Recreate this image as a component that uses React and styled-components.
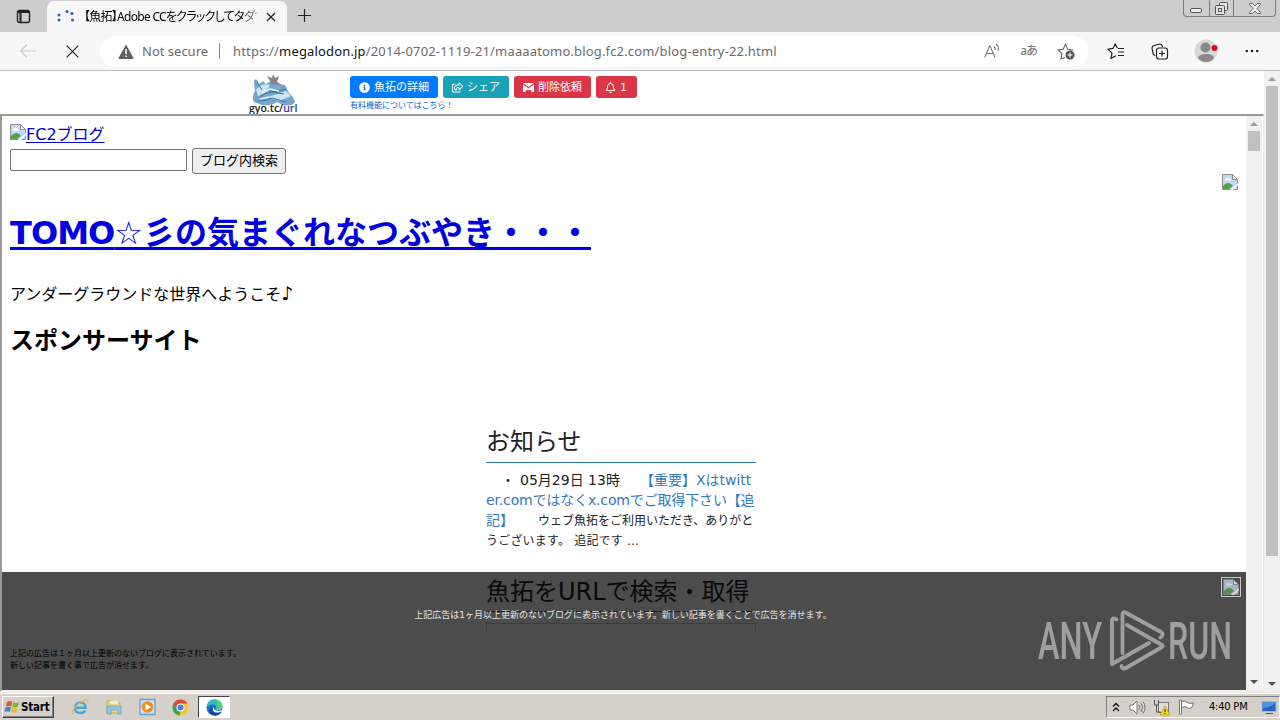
import React from 'react';
import styled, { createGlobalStyle, css } from 'styled-components';
import { FaInfoCircle, FaRegBell, FaRegShareSquare } from 'react-icons/fa';

const GlobalStyle = createGlobalStyle`
  * {
    box-sizing: border-box;
  }
  body {
    margin: 0;
    overflow: hidden;
    font-family: 'DejaVu Sans', 'Noto Sans CJK JP', sans-serif;
  }
  svg {
    display: block;
    flex: none;
  }
`;

const Desktop = styled.div`
  position: relative;
  display: flex;
  flex-direction: column;
  width: 1280px;
  height: 720px;
  overflow: hidden;
  background: #fff;
`;

// Tab strip
const TabStrip = styled.div`
  display: flex;
  align-items: flex-end;
  height: 32px;
  padding-left: 16px;
  background: #cdcdcd;
`;

const TabActions = styled.div`
  width: 31px;
  padding-bottom: 8px;
`;

const Tab = styled.div`
  display: flex;
  align-items: center;
  width: 240px;
  height: 31px;
  padding: 0 11px 0 10px;
  border-radius: 7px 7px 0 0;
  background: #f7f7f7;
`;

const TabTitle = styled.div`
  width: 174px;
  margin: 0 8px 0 9px;
  white-space: nowrap;
  font: 12px/20px 'Noto Sans', 'Noto Sans CJK JP', sans-serif;
  font-feature-settings: 'palt';
  letter-spacing: -0.72px;
  mask-image: linear-gradient(to right, #000 90%, rgba(0, 0, 0, 0.25) 100%);
`;

const NewTab = styled.div`
  flex: 1;
  padding: 0 0 9px 10px;
`;

const WindowButtons = styled.div`
  display: flex;
  align-self: flex-start;
  width: 93px;
  height: 17px;
  margin-right: 4px;
  border: 1px solid #7c7c7c;
  border-top: 0;
  border-radius: 0 0 4px 4px;
`;

const WindowButton = styled.div`
  display: flex;
  align-items: center;
  justify-content: center;
  width: ${(p) => p.$width}px;
  & + & {
    border-left: 1px solid #7c7c7c;
  }
`;

// Toolbar
const Toolbar = styled.div`
  display: flex;
  align-items: center;
  height: 39px;
  padding-left: 19px;
  border-bottom: 1px solid #b9b9b9;
  background: #f7f7f7;
`;

const AddressBar = styled.div`
  display: flex;
  align-items: center;
  width: 988px;
  height: 31px;
  margin: 0 19px 0 20px;
  padding: 0 13px 0 18px;
  border-radius: 16px;
  background: #fff;
  color: #6b6b6b;
  font: 13px/20px 'Noto Sans', sans-serif;
  white-space: nowrap;
`;

const NotSecure = styled.div`
  width: 78px;
  margin-left: 8px;
  border-right: 1px solid #8a8a8a;
  line-height: 16px;
`;

const Url = styled.div`
  flex: 1;
  padding-left: 13px;
  letter-spacing: 0.16px;
  b {
    color: #111;
    font-weight: 400;
  }
`;

const AddressIcons = styled.div`
  display: flex;
  align-items: center;
  gap: 20px;
`;

const Translate = styled.span`
  font: 12px/16px 'Noto Sans', 'Noto Sans CJK JP', sans-serif;
  letter-spacing: -1px;
`;

const BrowserIcons = styled.div`
  display: flex;
  align-items: center;
`;

const Spacer = styled.div`
  width: ${(p) => p.$width}px;
`;

// Page
const PageArea = styled.div`
  display: flex;
  height: 621px;
`;

const Page = styled.div`
  display: flex;
  flex-direction: column;
  width: 1264px;
`;

const ArchiveHeader = styled.div`
  display: flex;
  height: 43px;
  padding-left: 248px;
`;

const Logo = styled.div`
  width: 102px;
  padding-top: 2px;
`;

const Actions = styled.div`
  padding-top: 5px;
`;

const ButtonRow = styled.div`
  display: flex;
  gap: 5px;
`;

const ActionButton = styled.div`
  display: flex;
  align-items: center;
  gap: 4px;
  width: ${(p) => p.$width}px;
  height: 22px;
  padding-left: 9px;
  border-radius: 3px;
  background: ${(p) => p.$color};
  color: #fff;
  font-size: 11px;
  line-height: 22px;
  white-space: nowrap;
  span {
    padding-top: 2px;
  }
`;

const PaidLink = styled.div`
  height: 14px;
  padding-top: 1px;
  color: #0068d6;
  font-size: 8px;
  line-height: 13px;
`;

const Frame = styled.div`
  position: relative;
  display: flex;
  height: 578px;
  width: 1264px;
  border: 2px solid #9a9a9a;
  border-right: 1px solid #eee;
  border-bottom-color: #f0f0f0;
`;

const FrameBody = styled.div`
  display: flex;
  flex-direction: column;
  width: 1244px;
  height: 574px;
  padding: 7px 8px 0;
  overflow: hidden;
  color: #000;
  white-space: nowrap;
`;

const Fc2Link = styled.div`
  display: flex;
  align-items: flex-start;
  height: 25px;
  padding-top: 1px;
  color: #0000c8;
  font-size: 16px;
  line-height: 24px;
  span {
    text-decoration: underline;
    text-underline-offset: 2px;
    line-height: 22px;
  }
`;

const SearchRow = styled.div`
  display: flex;
  align-items: center;
  gap: 5px;
  height: 26px;
`;

const SearchInput = styled.input`
  width: 177px;
  height: 22px;
  margin-bottom: 2px;
  border: 1px solid #767676;
  border-radius: 2px;
`;

const SearchButton = styled.div`
  width: 94px;
  height: 26px;
  border: 1px solid #767676;
  border-radius: 3px;
  background: #efefef;
  font-size: 13px;
  line-height: 23px;
  text-align: center;
`;

const RightImage = styled.div`
  display: flex;
  justify-content: flex-end;
  height: 18px;
`;

const BlogTitle = styled.h1`
  margin: 17px 0 0;
  height: 48px;
  color: #0000e0;
  font-size: 32px;
  line-height: 49px;
  text-decoration: underline;
  text-decoration-thickness: 3px;
  text-underline-offset: 3px;
  text-decoration-skip-ink: none;
  span {
    letter-spacing: -0.95px;
  }
`;

const BlogIntro = styled.p`
  margin: 23px 0 0;
  height: 24px;
  font-size: 16px;
  line-height: 26px;
  span {
    font-size: 19px;
  }
`;

const SponsorTitle = styled.h2`
  margin: 18px 0 0;
  height: 36px;
  font-size: 24px;
  line-height: 39px;
`;

const Notice = styled.section`
  width: 270px;
  margin: 65px 0 0 476px;
  color: #222;
`;

const NoticeTitle = styled.h3`
  margin: 0;
  height: 40px;
  border-bottom: 1px solid #2a78b8;
  font-size: 24px;
  line-height: 39px;
  font-weight: 400;
`;

const NoticeLines = styled.div`
  padding-top: 7px;
`;

const NoticeLine = styled.div`
  display: flex;
  height: 20px;
  font-size: ${(p) => (p.$small ? 12 : 14)}px;
  line-height: ${(p) => (p.$small ? 22 : 20)}px;
  letter-spacing: ${(p) => p.$spacing || 0}px;
`;

const NoticeLink = styled.span`
  color: #3579b5;
  font-size: 14px;
  line-height: 20px;
`;

const NoticeText = styled.span`
  margin: 0 ${(p) => p.$after || 0}px 0 ${(p) => p.$indent || 0}px;
`;

const ArchiveTitle = styled(NoticeTitle)`
  margin-top: 22px;
  line-height: 41px;
`;

const FieldTop = styled.div`
  height: 8px;
  margin-top: 11px;
  border: 1px solid #ccc;
  border-bottom: 0;
`;

// Dark ad banner fixed over the bottom of the frame
const AdOverlay = styled.div`
  position: absolute;
  left: 0;
  bottom: 0;
  width: 1244px;
  height: 118px;
  padding: 36px 9px 0 7px;
  background: rgba(0, 0, 0, 0.7);
`;

const AdMessage = styled.div`
  height: 15px;
  color: #e4e4e4;
  font-size: 9px;
  line-height: 15px;
  text-align: center;
  white-space: nowrap;
`;

const AdNote = styled.div`
  margin: 25px 0 0 1px;
  color: #000;
  font-size: 8px;
  line-height: 12px;
`;

const AdClose = styled.div`
  position: absolute;
  top: 5px;
  right: 5px;
  padding: 1px;
  border: 1px solid #c8c8c8;
  svg {
    opacity: 0.75;
  }
`;

const Scrollbar = styled.div`
  display: flex;
  flex-direction: column;
  align-items: center;
  width: 16px;
  padding: 6px 0;
  background: #f1f1f1;
`;

const Thumb = styled.div`
  width: 12px;
  height: ${(p) => p.$height}px;
  margin: 5px 0 auto;
  background: #c0c0c0;
`;

const Arrow = styled.div`
  width: 0;
  height: 0;
  border: 4px solid transparent;
  ${(p) =>
    p.$up
      ? css`
          border-top: 0;
          border-bottom: 4px solid #989898;
        `
      : css`
          border-bottom: 0;
          border-top: 4px solid #505050;
        `}
`;

// Taskbar
const Taskbar = styled.div`
  display: flex;
  align-items: center;
  height: 28px;
  padding: 1px 0 0 2px;
  border-top: 1px solid #ece9e4;
  background: #d5d0c9;
  box-shadow: inset 0 1px 0 #fff;
`;

const StartButton = styled.div`
  display: flex;
  align-items: center;
  gap: 1px;
  width: 52px;
  height: 22px;
  padding-left: 1px;
  border: 1px solid;
  border-color: #fff #404040 #404040 #fff;
  box-shadow: inset -1px -1px 0 #808080;
  font: bold 11.5px/20px 'DejaVu Sans Condensed', sans-serif;
  letter-spacing: -0.2px;
`;

const QuickLaunch = styled.div`
  display: flex;
  align-items: center;
  gap: 16px;
  margin-left: 17px;
`;

const ActiveTask = styled.div`
  display: flex;
  align-items: center;
  justify-content: center;
  width: 32px;
  height: 22px;
  margin: 0 auto 0 9px;
  border: 1px solid;
  border-color: #404040 #fff #fff #404040;
  background: #fff;
`;

const Tray = styled.div`
  display: flex;
  align-items: center;
  width: 174px;
  height: 22px;
  padding-left: 5px;
  border: 1px solid;
  border-color: #808080 #fff #fff #808080;
  font: 11px/20px 'DejaVu Sans Condensed', sans-serif;
`;

const Clock = styled.div`
  width: 52px;
  margin-left: 14px;
  letter-spacing: -0.2px;
  white-space: nowrap;
`;

const Watermark = styled.div`
  position: absolute;
  left: 1036px;
  top: 604px;
`;

const BrokenImage = () => (
  <svg width="16" height="16" viewBox="0 0 16 16">
    <path d="M.5.5h10l5 5v10H.5z" fill="#c6d8f4" stroke="#8d9092" />
    <path d="M10.500.5v5h5z" fill="#fff" stroke="#8d9092" />
    <path d="M3 5.500q1.500-3 4-1 2 0 2 2H3z" fill="#fff" />
    <path d="M1 15v-3q4-5 8-2l2 2-4 3z" fill="#4ea643" />
    <path d="M8 16l8-7v2l-5 5z" fill="#fff" />
  </svg>
);

const GyotakuLogo = () => (
  <svg width="54" height="43" viewBox="0 0 54 43">
    <path d="M6 29Q3 24 7 18L6 9q0-4 3-2l2 4 4-3 3 3 5-3 6 3 8 1 4 8 4 4 2 5q-4 5-12 3l-6-3q-6 4-15 3z" fill="#73a7cc" />
    <path d="M8 17Q14 9 22 12l-3 6-9 5zM20 24l18-6 5 5-12 5z" fill="#cfe4f2" />
    <path d="M22 8l-3-5 5 2 1-4 2 4 4-2-2 6 5 3-10-1z" fill="#8a8180" />
    <path d="M12 24q6-5 12-5l12 2M9 28q10 0 15-3l14 4M9 9l5 8M18 17l8 2 12-3" fill="none" stroke="#3d74a6" strokeWidth="1" />
    <path d="M14 20l8-4 9 2M12 26l9-2" fill="none" stroke="#eaf6fc" strokeWidth="1.500" />
    <text x="1" y="39" fontFamily="Open Sans" fontWeight="600" fontSize="10.500" fill="#222">
      gyo.tc/
      <tspan fill="#343a8c">url</tspan>
    </text>
  </svg>
);

const EdgeLogo = () => (
  <svg width="17" height="17" viewBox="0 0 17 17">
    <circle cx="8.500" cy="8.500" r="8" fill="#1673c8" />
    <path d="M.6 8Q1 .5 8.500.5q7.500.5 8 6.500 0 4-4 4-3 0-2.500-2 .5-3-2.500-3.500Q3 5 .6 8z" fill="#35b8c4" />
    <path d="M9 .5q7 .5 7.500 6.500 0 4-4 4-1 0-2-.6Q14 6 9 .5z" fill="#5bd06c" />
    <path d="M6 8q-1 6 5 6.500 3 0 5-2-2 4-7 4.200Q3 16 3.500 11 4 8.500 6 8z" fill="#114a8b" />
    <path d="M8 8q-.5 5 7.500 3.500l1-1-1 2Q9 15 7 11.500q-.5-2 1-3.500z" fill="#fff" />
  </svg>
);

const AnyRunMark = () => (
  <svg width="210" height="72" viewBox="0 0 210 72" opacity="0.5">
    <g fill="#f2f2f2" fontFamily="Roboto" fontSize="52" fontWeight="500">
      <text x="2" y="55" textLength="64" lengthAdjust="spacingAndGlyphs">ANY</text>
      <text x="132" y="55" textLength="64" lengthAdjust="spacingAndGlyphs">RUN</text>
    </g>
    <g fill="none" stroke="#f2f2f2" strokeWidth="3.800" strokeLinejoin="round" strokeLinecap="round">
      <path d="M86.500 49V11q0-4 3-2.500L125 28q3.500 2.500-.5 5.500" />
      <path d="M80.500 15.500q-4.500-3-4.500 2V60l37-21" />
      <path d="M91 21l35 20q1.500 1 0 2L89 64.500q-3 .5-3.500-2.500" />
    </g>
  </svg>
);

const DOTS = [
  [2, 5], [2, 10], [10, 1.500], [15, 3.500], [15.500, 10],
];

const NOTE_LINES = [
  '上記の広告は１ヶ月以上更新のないブログに表示されています。',
  '新しい記事を書く事で広告が消せます。',
];

function BrowserChrome() {
  return (
    <>
      <TabStrip>
        <TabActions>
          <svg width="15" height="15" viewBox="0 0 15 15" fill="none" stroke="#222" strokeWidth="1.400">
            <rect x="1.500" y="1.500" width="12" height="12" rx="2" />
            <path d="M2 3h11M4.500 3v10" strokeWidth="2" />
          </svg>
        </TabActions>
        <Tab>
          <svg width="18" height="16" viewBox="0 0 18 16" fill="#2c67a3">
            {DOTS.map(([x, y]) => (
              <circle key={`${x}-${y}`} cx={x} cy={y + 1} r="1.500" />
            ))}
          </svg>
          <TabTitle>【魚拓】Adobe CCをクラックしてタダで</TabTitle>
          <svg width="10" height="10" viewBox="0 0 10 10" stroke="#222" strokeWidth="1.300">
            <path d="M1 1l8 8M9 1l-8 8" />
          </svg>
        </Tab>
        <NewTab>
          <svg width="15" height="15" viewBox="0 0 15 15" stroke="#222" strokeWidth="1.200">
            <path d="M7.500 1v13M1 7.500h13" />
          </svg>
        </NewTab>
        <WindowButtons>
          <WindowButton $width={25}>
            <svg width="12" height="12" viewBox="0 0 12 12">
              <rect x=".5" y="6.500" width="11" height="4" rx="1.500" fill="#eee" stroke="#555" />
            </svg>
          </WindowButton>
          <WindowButton $width={25}>
            <svg width="13" height="13" viewBox="0 0 13 13" fill="#e2e2e2" stroke="#555">
              <rect x="4.500" y=".5" width="8" height="8" rx="1" />
              <rect x=".5" y="3.500" width="9" height="9" rx="1" />
              <rect x="3.500" y="6.500" width="3" height="3" />
            </svg>
          </WindowButton>
          <WindowButton $width={42}>
            <svg width="12" height="11" viewBox="0 0 12 11">
              <path d="M.5.5h3L6 3 8.500.5h3v1L8 5.500l3.500 4v1h-3L6 8l-2.500 2.500h-3v-1L4 5.500.5 1.500z" fill="#eee" stroke="#666" />
            </svg>
          </WindowButton>
        </WindowButtons>
      </TabStrip>
      <Toolbar>
        <svg width="18" height="14" viewBox="0 0 18 14" fill="none" stroke="#c9c9c9" strokeWidth="1.200">
          <path d="M17 7H1.500M8 .7L1.500 7 8 13.300" />
        </svg>
        <Spacer $width={29} />
        <svg width="13" height="13" viewBox="0 0 13 13" stroke="#222" strokeWidth="1.200">
          <path d="M.7.7l11.600 11.600M12.300.7L.7 12.300" />
        </svg>
        <Spacer $width={1} />
        <AddressBar>
          <svg width="16" height="15" viewBox="0 0 16 15">
            <path d="M8 0.500l7.500 13.500q0 1-1 1h-13q-1 0-1-1z" fill="#606060" />
            <path d="M8 5v5M8 11.500v1.500" stroke="#fff" strokeWidth="1.500" />
          </svg>
          <NotSecure>Not secure</NotSecure>
          <Url>
            https://<b>megalodon.jp</b>/2014-0702-1119-21/maaaatomo.blog.fc2.com/blog-entry-22.html
          </Url>
          <AddressIcons>
            <svg width="16" height="16" viewBox="0 0 16 16" fill="none" stroke="#777" strokeWidth="1.100">
              <path d="M.7 14.500L5.500 3h.6L11 14.500M2.300 10.500h7M10 3.500q1.500 1.500 1 3.500M12 1q3.500 3 2 7" />
            </svg>
            <Translate>aあ</Translate>
            <svg width="18" height="17" viewBox="0 0 18 17" fill="none" stroke="#666" strokeWidth="1.100">
              <path d="M8 14.500l-4 1.500 1-5.200L1 7l5.200-.8L8.500 1.200l2.200 5 5.300.8" />
              <circle cx="13" cy="12" r="4.500" fill="#555" stroke="none" />
              <path d="M13 9.500v5M10.500 12h5" stroke="#fff" />
            </svg>
          </AddressIcons>
        </AddressBar>
        <BrowserIcons>
          <svg width="18" height="16" viewBox="0 0 18 16" fill="none" stroke="#222" strokeWidth="1.200">
            <path d="M10.500 5.200L8.200 1 6 5.400 1 6.200l4 4-1 5.200 5-2.700M11 5.500h6M11 9h6M11 12.500h6" />
          </svg>
          <Spacer $width={26} />
          <svg width="18" height="17" viewBox="0 0 18 17" fill="none" stroke="#222" strokeWidth="1.200">
            <path d="M4 12.500Q2 12 1.800 9.500L1 5q0-2 2-2.500l6-1.500q2 0 2.500 3" />
            <rect x="5.500" y="5" width="11" height="11" rx="2.500" />
            <path d="M11 7.500v6M8 10.500h6" />
          </svg>
          <Spacer $width={25} />
          <svg width="24" height="24" viewBox="0 0 24 24">
            <circle cx="12" cy="12" r="11.500" fill="#d8d8d4" />
            <circle cx="11.500" cy="8.500" r="5" fill="#8a8888" />
            <path d="M4 19q1-4 8-4t8 4q-3 4-8 4t-8-4z" fill="#8a8888" />
            <circle cx="20.500" cy="9" r="3" fill="#d3101c" />
          </svg>
          <Spacer $width={27} />
          <svg width="14" height="4" viewBox="0 0 14 4" fill="#222">
            <circle cx="1.800" cy="2" r="1.300" />
            <circle cx="7" cy="2" r="1.300" />
            <circle cx="12.200" cy="2" r="1.300" />
          </svg>
        </BrowserIcons>
      </Toolbar>
    </>
  );
}

function BlogFrame() {
  return (
    <Frame>
      <FrameBody>
        <Fc2Link>
          <BrokenImage />
          <span>FC2ブログ</span>
        </Fc2Link>
        <SearchRow>
          <SearchInput />
          <SearchButton>ブログ内検索</SearchButton>
        </SearchRow>
        <RightImage>
          <BrokenImage />
        </RightImage>
        <BlogTitle>
          <span>TOMO</span>☆彡の気まぐれなつぶやき・・・
        </BlogTitle>
        <BlogIntro>
          アンダーグラウンドな世界へようこそ<span>♪</span>
        </BlogIntro>
        <SponsorTitle>スポンサーサイト</SponsorTitle>
        <Notice>
          <NoticeTitle>お知らせ</NoticeTitle>
          <NoticeLines>
            <NoticeLine>
              <NoticeText $indent={15} $after={5}>・</NoticeText>
              <NoticeText $after={20}>05月29日 13時</NoticeText>
              <NoticeLink>【重要】Xはtwitt</NoticeLink>
            </NoticeLine>
            <NoticeLine $spacing={-0.15}>
              <NoticeLink>er.comではなくx.comでご取得下さい【追</NoticeLink>
            </NoticeLine>
            <NoticeLine $small>
              <NoticeLink>記】</NoticeLink>
              <NoticeText $indent={24}>ウェブ魚拓をご利用いただき、ありがと</NoticeText>
            </NoticeLine>
            <NoticeLine $small $spacing={0.2}>うございます。 追記です ...</NoticeLine>
          </NoticeLines>
          <ArchiveTitle>魚拓をURLで検索・取得</ArchiveTitle>
          <FieldTop />
        </Notice>
      </FrameBody>
      <Scrollbar>
        <Arrow $up />
        <Thumb $height={20} />
        <Arrow />
      </Scrollbar>
      <AdOverlay>
        <AdMessage>
          上記広告は1ヶ月以上更新のないブログに表示されています。新しい記事を書くことで広告を消せます。
        </AdMessage>
        <AdNote>
          {NOTE_LINES.map((line) => (
            <div key={line}>{line}</div>
          ))}
        </AdNote>
        <AdClose>
          <BrokenImage />
        </AdClose>
      </AdOverlay>
    </Frame>
  );
}

function WindowsTaskbar() {
  return (
    <Taskbar>
      <StartButton>
        <svg width="16" height="16" viewBox="0 0 16 16">
          <path d="M3 3q3-2 5.500 0L7.300 7.500Q5 6 1.800 7.500z" fill="#e2592a" />
          <path d="M9.300 3.300q3 1.300 5.700 0L13.800 8q-3 1-5.500-.3z" fill="#7db83a" />
          <path d="M1.500 8.500q3-1.500 5.500 0L5.800 13q-2.500-1.500-5.500 0z" fill="#3e85cf" />
          <path d="M8 8.700q3 1.300 5.500 0l-1.200 4.600q-3 1-5.500-.3z" fill="#f3bb2c" />
        </svg>
        Start
      </StartButton>
      <QuickLaunch>
        <svg width="18" height="18" viewBox="0 0 18 18">
          <path d="M5 9.800h9.500q0-5.300-5-5.300T4 10q0 5 5.500 5 3.500 0 4.500-2.500" fill="none" stroke="#45a6e4" strokeWidth="2.400" />
          <path d="M3 16Q0 16 2 12.500 6 5 14 2q4-1 2.500 3" fill="none" stroke="#e9b83a" strokeWidth="1.300" />
        </svg>
        <svg width="18" height="18" viewBox="0 0 18 18">
          <path d="M2 3h5l1 2h7v10H2z" fill="#f0d480" stroke="#cdaa4c" />
          <path d="M5 3h8v3H5z" fill="#f7edc0" />
          <path d="M2 8h14v8h-3v-4H6v4H2z" fill="#8fc7e4" stroke="#5b9fc5" strokeWidth=".7" />
        </svg>
        <svg width="17" height="18" viewBox="0 0 17 18">
          <path d="M1 1.500h15v15H1z" fill="#cfe2f2" stroke="#62a1d6" strokeWidth="1.300" />
          <circle cx="8.500" cy="9" r="5.800" fill="#f08a1c" />
          <path d="M6.500 5.500l5.500 3.500-5.500 3.500z" fill="#fff" />
        </svg>
        <svg width="17" height="17" viewBox="0 0 17 17">
          <circle cx="8.500" cy="8.500" r="8" fill="#f7c62f" />
          <path d="M1.500 4.600a8 8 0 0 1 14 0h-7L5 10.500z" fill="#df4436" />
          <path d="M1.500 4.600L5 10.600l3.500 2-1 3.900a8 8 0 0 1-6-11.900z" fill="#34a353" />
          <circle cx="8.500" cy="8.500" r="4" fill="#fff" />
          <circle cx="8.500" cy="8.500" r="3" fill="#3f7fea" />
        </svg>
      </QuickLaunch>
      <ActiveTask>
        <EdgeLogo />
      </ActiveTask>
      <Tray>
        <svg width="8" height="10" viewBox="0 0 8 10" fill="none" stroke="#111" strokeWidth="1.300">
          <path d="M1 4.500L4 1.500l3 3M1 9l3-3 3 3" />
        </svg>
        <Spacer $width={9} />
        <svg width="17" height="15" viewBox="0 0 17 15" fill="none" stroke="#777">
          <path d="M1 5h3l4-4v13l-4-4H1z" fill="#fff" />
          <path d="M10 5q1.500 2.500 0 5M12 3q3 4.500 0 9M14 1.500q4 6 0 12" />
        </svg>
        <Spacer $width={7} />
        <svg width="18" height="17" viewBox="0 0 18 17">
          <rect x="5.500" y="3.500" width="10" height="10" fill="#ddd" stroke="#777" />
          <path d="M1.500 1v5h4V1M3.500 6v7h4" fill="none" stroke="#555" />
          <path d="M12 7l5 9H7z" fill="#f9d42a" stroke="#b18e12" strokeWidth=".6" />
          <path d="M12 10v3M12 14v1" stroke="#222" />
        </svg>
        <Spacer $width={7} />
        <svg width="17" height="16" viewBox="0 0 17 16">
          <path d="M3.500 2.500Q7 1 9 3.500q3 1.500 6.500.5l-2 5Q10 10 8 8 6 7.500 3.500 8.500z" fill="#fff" stroke="#777" />
          <path d="M1.500 1h2v14h-2z" fill="#fff" stroke="#777" />
        </svg>
        <Clock>4:40 PM</Clock>
        <svg width="17" height="15" viewBox="0 0 17 15">
          <rect x="1" y="1.500" width="14" height="10" fill="#2466c5" stroke="#9db9dd" />
          <path d="M1.500 8q7 0 13-5V2h-13z" fill="#4e94e3" />
          <path d="M5 13.500h7" stroke="#555" />
        </svg>
      </Tray>
    </Taskbar>
  );
}

function App() {
  return (
    <>
      <GlobalStyle />
      <Desktop>
        <BrowserChrome />
        <PageArea>
          <Page>
            <ArchiveHeader>
              <Logo>
                <GyotakuLogo />
              </Logo>
              <Actions>
                <ButtonRow>
                  <ActionButton $width={88} $color="#007bff">
                    <FaInfoCircle size={11} />
                    <span>魚拓の詳細</span>
                  </ActionButton>
                  <ActionButton $width={66} $color="#17a2b8">
                    <FaRegShareSquare size={11} />
                    <span>シェア</span>
                  </ActionButton>
                  <ActionButton $width={77} $color="#dc3545">
                    <svg width="11" height="9" viewBox="0 0 11 9" fill="#fff">
                      <path d="M0 0h11L5.500 4zM0 1.500l5.500 4 5.500-4V9H9L7 6.500 5.500 7.500 4 6.500 2 9H0z" />
                    </svg>
                    <span>削除依頼</span>
                  </ActionButton>
                  <ActionButton $width={41} $color="#dc3545">
                    <FaRegBell size={11} />
                    <span>1</span>
                  </ActionButton>
                </ButtonRow>
                <PaidLink>有料機能についてはこちら！</PaidLink>
              </Actions>
            </ArchiveHeader>
            <BlogFrame />
          </Page>
          <Scrollbar>
            <Arrow $up />
            <Thumb $height={470} />
            <Arrow />
          </Scrollbar>
        </PageArea>
        <WindowsTaskbar />
        <Watermark>
          <AnyRunMark />
        </Watermark>
      </Desktop>
    </>
  );
}

export default App;
